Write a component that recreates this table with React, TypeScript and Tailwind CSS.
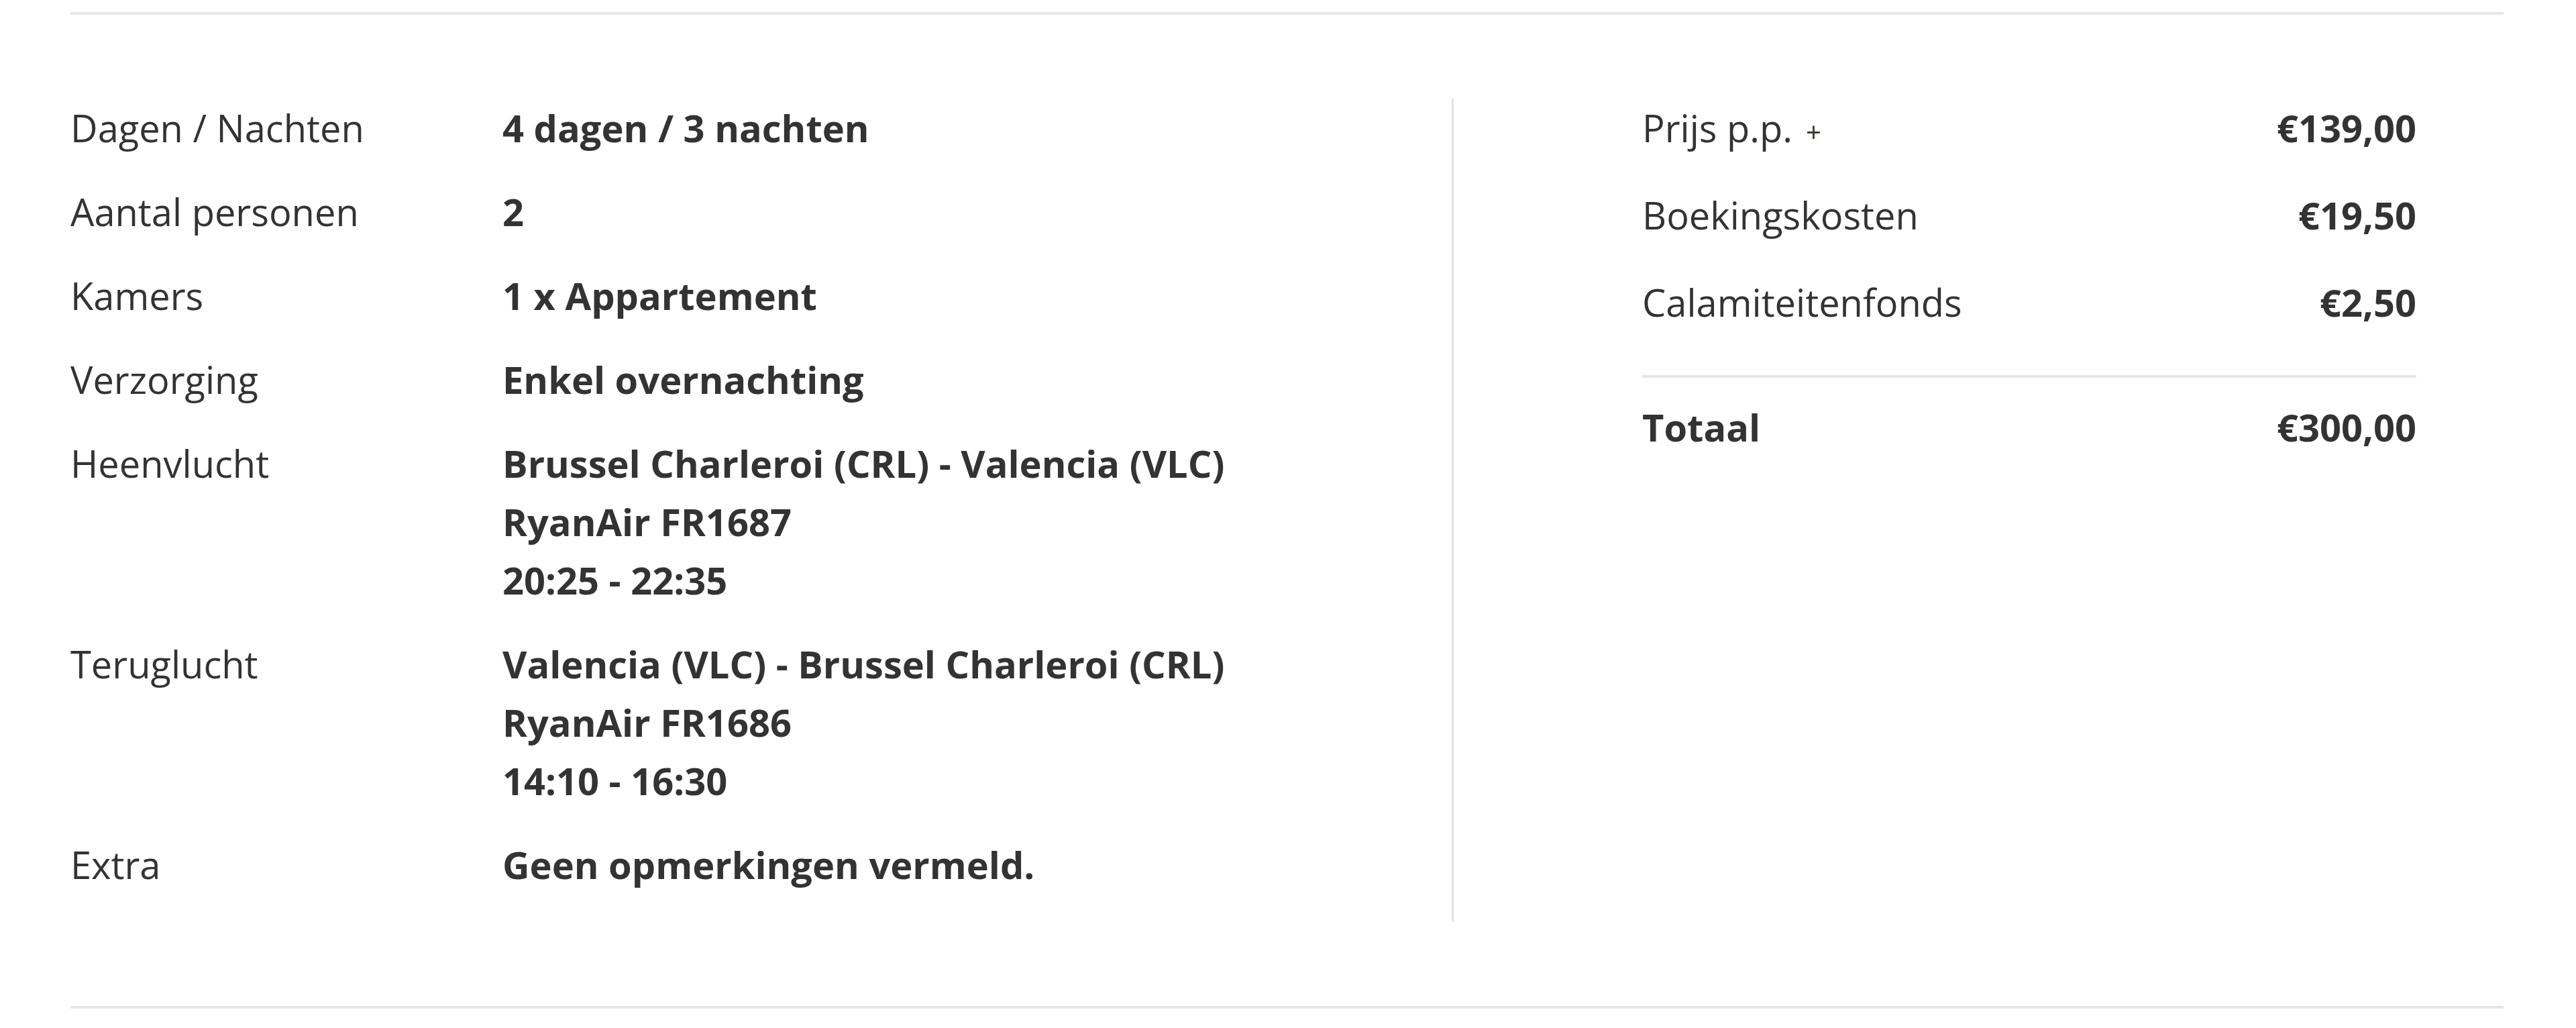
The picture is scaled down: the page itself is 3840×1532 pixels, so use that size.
import React from "react";

const details = [
  { label: "Dagen / Nachten", value: ["4 dagen / 3 nachten"] },
  { label: "Aantal personen", value: ["2"] },
  { label: "Kamers", value: ["1 x Appartement"] },
  { label: "Verzorging", value: ["Enkel overnachting"] },
  {
    label: "Heenvlucht",
    value: ["Brussel Charleroi (CRL) - Valencia (VLC)", "RyanAir FR1687", "20:25 - 22:35"],
  },
  {
    label: "Teruglucht",
    value: ["Valencia (VLC) - Brussel Charleroi (CRL)", "RyanAir FR1686", "14:10 - 16:30"],
  },
  { label: "Extra", value: ["Geen opmerkingen vermeld."] },
];

const costs = [
  { label: "Prijs p.p.", amount: "€139,00", toggle: true },
  { label: "Boekingskosten", amount: "€19,50" },
  { label: "Calamiteitenfonds", amount: "€2,50" },
];

export default function App() {
  return (
    <div
      className="w-[3840px] h-[1532px] bg-white text-[#333333] text-[56px] leading-[87px] pl-[105px] pr-[108px] pt-[18px]"
      style={{ fontFamily: '"Open Sans", "Noto Sans", sans-serif' }}
    >
      <div className="h-[4px] bg-[#e6e6e6]" />

      <div className="flex mt-[125px]">
        {/* Booking details */}
        <div className="w-[2059px] flex flex-col gap-[38px] pb-[41px]">
          {details.map((row) => (
            <div key={row.label} className="flex">
              <div className="w-[644px] shrink-0">{row.label}</div>
              <div className="font-bold">
                {row.value.map((line) => (
                  <div key={line}>{line}</div>
                ))}
              </div>
            </div>
          ))}
        </div>

        {/* Price summary */}
        <div className="flex-1 border-l-[3px] border-[#e2e2e2] pl-[281px] pr-[130px]">
          <div className="flex flex-col gap-[43px]">
            {costs.map((c) => (
              <div key={c.label} className="flex justify-between">
                <span>
                  {c.label}
                  {c.toggle && <span className="ml-[20px] text-[40px] leading-none">+</span>}
                </span>
                <span className="font-bold">{c.amount}</span>
              </div>
            ))}
          </div>
          <div className="h-[4px] bg-[#e6e6e6] mt-[65px] mb-[30px]" />
          <div className="flex justify-between font-bold">
            <span>Totaal</span>
            <span>€300,00</span>
          </div>
        </div>
      </div>

      <div className="h-[4px] bg-[#e6e6e6] mt-[126px]" />
    </div>
  );
}
